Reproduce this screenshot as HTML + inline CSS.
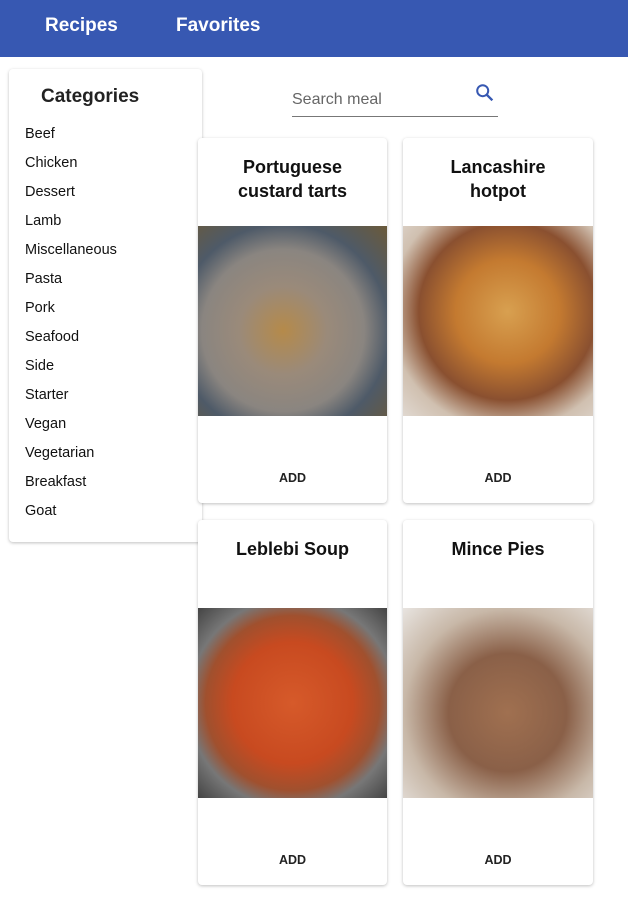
<!DOCTYPE html>
<html><head><style>
*{margin:0;padding:0;box-sizing:border-box}
body{width:628px;height:897px;background:#fff;font-family:"Liberation Sans",Arial,sans-serif;position:relative;overflow:hidden}
.hdr{position:absolute;left:0;top:0;width:628px;height:57px;background:#3758b2}
.hdr span{position:absolute;top:15px;color:#fff;font-weight:bold;font-size:19px}
.side{position:absolute;left:9px;top:69px;width:193px;height:473px;background:#fff;border-radius:4px;box-shadow:0 1px 3px rgba(0,0,0,.25)}
.side h3{position:absolute;left:32px;top:17px;font-size:19px;color:#222}
.side div{position:absolute;left:16px;font-size:14.5px;color:#111}
.search{position:absolute;left:292px;top:86px;width:206px;height:31px;border-bottom:1px solid #777}
.search span{position:absolute;left:0;top:5px;font-size:16px;color:#666}
.card{position:absolute;width:189px;height:365px;background:#fff;border-radius:4px;box-shadow:0 1px 3px rgba(0,0,0,.25);overflow:hidden}
.card h4{position:absolute;left:0;width:100%;top:17px;text-align:center;font-size:18px;line-height:24px;color:#111}
.card .img{position:absolute;left:0;top:88px;width:189px;height:190px}
.card .add{position:absolute;left:0;width:100%;top:333px;text-align:center;font-size:12.5px;font-weight:bold;color:#222}
</style></head><body>
<div class="hdr"><span style="left:45px">Recipes</span><span style="left:176px">Favorites</span></div>
<div class="side"><h3>Categories</h3>
<div style="top:57px">Beef</div><div style="top:86px">Chicken</div><div style="top:115px">Dessert</div><div style="top:144px">Lamb</div><div style="top:173px">Miscellaneous</div><div style="top:202px">Pasta</div><div style="top:231px">Pork</div><div style="top:260px">Seafood</div><div style="top:289px">Side</div><div style="top:318px">Starter</div><div style="top:347px">Vegan</div><div style="top:376px">Vegetarian</div><div style="top:405px">Breakfast</div><div style="top:434px">Goat</div>
</div>
<div class="search"><span>Search meal</span>
<svg style="position:absolute;left:182px;top:-4px" width="22" height="22" viewBox="0 0 24 24"><circle cx="9.5" cy="9.5" r="6" fill="none" stroke="#3758b2" stroke-width="2.2"/><path d="M14 14l6 6" stroke="#3758b2" stroke-width="2.6"/></svg></div>
<div class="card" style="left:198px;top:138px"><h4>Portuguese<br>custard tarts</h4>
<div class="img" style="background:radial-gradient(circle at 45% 55%,#b58a4a 0,#9a8a7a 30%,#8a8580 55%,#4e5a68 72%,#6b5a3a 100%)"></div><div class="add">ADD</div></div>
<div class="card" style="left:403px;top:138px;width:190px"><h4>Lancashire<br>hotpot</h4>
<div class="img" style="width:190px;background:radial-gradient(ellipse at 55% 45%,#d8a050 0,#c47a30 35%,#8a5030 60%,#d0c0b0 80%,#e0d8d0 100%)"></div><div class="add">ADD</div></div>
<div class="card" style="left:198px;top:520px"><h4>Leblebi Soup</h4>
<div class="img" style="background:radial-gradient(ellipse at 50% 50%,#d65a2a 0,#c84a20 45%,#a0502e 65%,#777 78%,#444 100%)"></div><div class="add">ADD</div></div>
<div class="card" style="left:403px;top:520px;width:190px"><h4>Mince Pies</h4>
<div class="img" style="width:190px;background:radial-gradient(ellipse at 55% 55%,#a07050 0,#8a6048 40%,#c8b8a8 70%,#e8e4e0 100%)"></div><div class="add">ADD</div></div>
</body></html>
